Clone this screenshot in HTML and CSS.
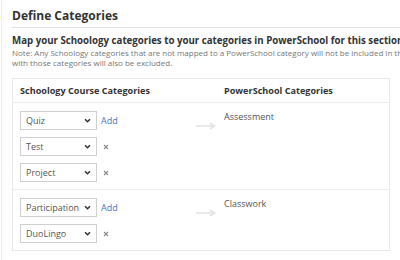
FILE: index.html
```html
<!DOCTYPE html>
<html lang="en">
<head>
  <meta charset="UTF-8">
  <title>Define Categories</title>
  <link rel="stylesheet" href="styles.css">
</head>
<body>

<div class="panel">
  <h1 class="title">Define Categories</h1>
  <p class="lead">Map your Schoology categories to your categories in PowerSchool for this section</p>
  <p class="note">Note: Any Schoology categories that are not mapped to a PowerSchool category will not be included in the sync.<br>with those categories will also be excluded.</p>

  <div class="map">
    <div class="map-head">
      <div class="col-left">Schoology Course Categories</div>
      <div></div>
      <div class="col-right">PowerSchool Categories</div>
    </div>

    <div class="group">
      <div class="col-left">
        <div class="row">
          <div class="picker"><span>Quiz</span><svg viewBox="0 0 8 6"><path d="M1 1.5 L4 4.5 L7 1.5" /></svg></div>
          <a class="add">Add</a>
        </div>
        <div class="row">
          <div class="picker"><span>Test</span><svg viewBox="0 0 8 6"><path d="M1 1.5 L4 4.5 L7 1.5" /></svg></div>
          <svg class="remove" viewBox="0 0 6 6"><path d="M1 1 L5 5 M5 1 L1 5" /></svg>
        </div>
        <div class="row">
          <div class="picker"><span>Project</span><svg viewBox="0 0 8 6"><path d="M1 1.5 L4 4.5 L7 1.5" /></svg></div>
          <svg class="remove" viewBox="0 0 6 6"><path d="M1 1 L5 5 M5 1 L1 5" /></svg>
        </div>
      </div>
      <div class="arrow"><svg viewBox="0 0 20 8"><path d="M0 4 H18 M14 1 L18.5 4 L14 7" /></svg></div>
      <div class="col-right target">Assessment</div>
    </div>

    <div class="group">
      <div class="col-left">
        <div class="row">
          <div class="picker"><span>Participation</span><svg viewBox="0 0 8 6"><path d="M1 1.5 L4 4.5 L7 1.5" /></svg></div>
          <a class="add">Add</a>
        </div>
        <div class="row">
          <div class="picker"><span>DuoLingo</span><svg viewBox="0 0 8 6"><path d="M1 1.5 L4 4.5 L7 1.5" /></svg></div>
          <svg class="remove" viewBox="0 0 6 6"><path d="M1 1 L5 5 M5 1 L1 5" /></svg>
        </div>
      </div>
      <div class="arrow"><svg viewBox="0 0 20 8"><path d="M0 4 H18 M14 1 L18.5 4 L14 7" /></svg></div>
      <div class="col-right target">Classwork</div>
    </div>
  </div>
</div>

</body>
</html>
```

FILE: styles.css
```css
body {
  margin: 0;
  background: #fff;
  font-family: 'Open Sans', 'Liberation Sans', sans-serif;
  color: #333;
  overflow: hidden;
}

.panel {
  margin-left: 1px;
  border-left: 1px solid #ececec;
  padding: 8px 0 8px 10px;
  width: 560px;
  height: 244px;
}

.title {
  margin: 0;
  font-size: 12px;
  font-weight: 700;
  line-height: 16px;
  padding-bottom: 3px;
  border-bottom: 1px solid #e2e2e2;
}

.lead {
  margin: 7px 0 0;
  font-size: 9.7px;
  font-weight: 700;
  line-height: 12px;
  white-space: nowrap;
}

.note {
  margin: 1px 0 0;
  font-size: 8px;
  line-height: 10px;
  color: #777;
  white-space: nowrap;
}

.map {
  margin-top: 10px;
  width: 376px;
  border: 1px solid #e8e8e8;
}

.map-head,
.group {
  display: grid;
  grid-template-columns: 183px 28px 1fr;
}

.map-head {
  height: 23px;
  align-items: center;
  font-size: 9.1px;
  font-weight: 700;
  border-bottom: 1px solid #ececec;
}

.col-left {
  padding-left: 7px;
}

.group {
  padding: 8px 0 7px;
}

.group + .group {
  border-top: 1px solid #ececec;
}

.row {
  display: flex;
  align-items: center;
  gap: 4px;
}

.row + .row {
  margin-top: 7px;
}

.picker {
  height: 17px;
  width: 65px;
  border: 1px solid #cfcfcf;
  display: flex;
  align-items: center;
  justify-content: space-between;
  padding: 0 5px 0 5px;
  font-size: 9px;
  color: #555;
}

.picker svg {
  width: 7px;
  height: 5px;
  fill: none;
  stroke: #333;
  stroke-width: 1.9;
}

.add {
  font-size: 9px;
  color: #3c78c8;
}

.remove {
  width: 6px;
  height: 6px;
  margin-left: 2px;
  fill: none;
  stroke: #8a8a8a;
  stroke-width: 1.1;
}

.arrow {
  padding-top: 2px;
}

.arrow svg {
  width: 20px;
  height: 8px;
  fill: none;
  stroke: #e4e4e4;
  stroke-width: 1.6;
}

.target {
  font-size: 9px;
  color: #555;
  line-height: 12px;
}
```
